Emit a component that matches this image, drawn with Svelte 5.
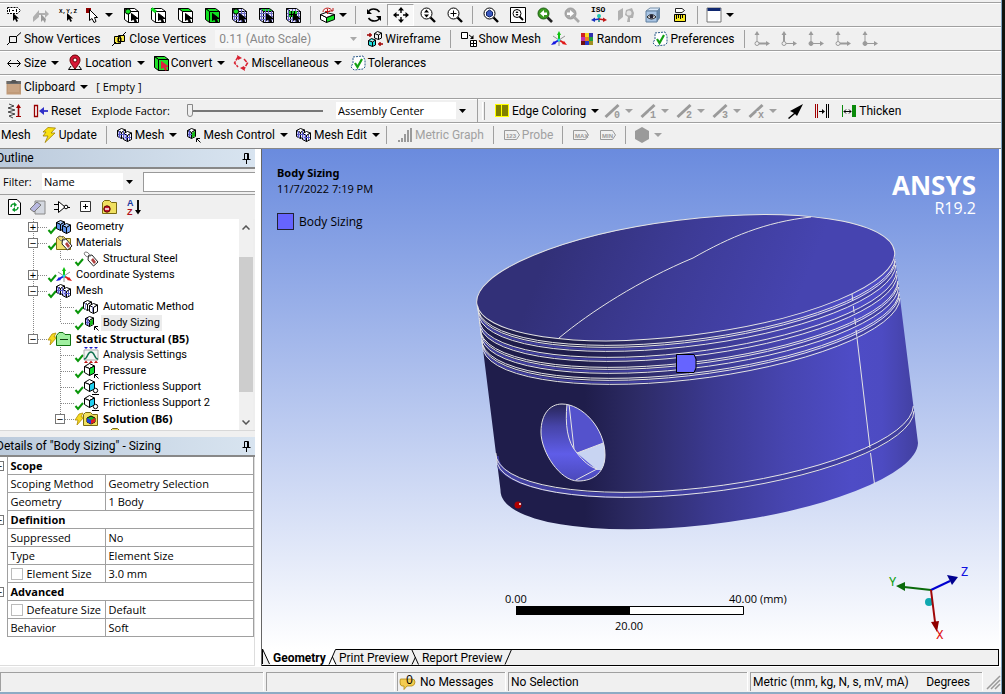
<script>
  const cursor = (x, y, f = '#fff', s = '#000') =>
    `<path transform="translate(${x} ${y})" d="M.5 .5V7.5L2.500 6L4 9H5.500L4.500 5.500H7Z" fill="${f}" stroke="${s}"/>`;
  const cube = (top, side, front, stroke = '#000') =>
    `<path d="M1.500 1.500H11.500L15.500 4.500H5.500Z" fill="${top}" stroke="${stroke}"/><path d="M1.500 1.500L5.500 4.500V15.500L1.500 12.500Z" fill="${side}" stroke="${stroke}"/><path d="M5.500 4.500H15.500V15.500H5.500Z" fill="${front}" stroke="${stroke}"/>`;
  const grid = '<path d="M7.500 2V15M10.500 2V15M13.500 4V15M2 6.500H15M2 9.500H15M2 12.500H15M3.500 2V14" stroke="#6a6ac0" fill="none"/>';
  const hexCube = (x, y, a, b, c) =>
    `<g transform="translate(${x} ${y})" stroke="#000"><path d="M.5 2.500L4.500 .5L8.500 2L4.500 4.500Z" fill="${a}"/><path d="M.5 2.500L4.500 4.500V10.500L.5 8.500Z" fill="${b}"/><path d="M4.500 4.500L8.500 2V8.500L4.500 10.500Z" fill="${c}"/></g>`;
  const twin = (a, b, c) => hexCube(0, 1, a, b, c) + hexCube(6, 4, a, b, c);
  const meshTwin = twin('#fff', '#c4c4f8', '#fff') + '<path d="M2.500 4V11M6.500 4V11M9.500 7V13M12.500 8V13M1 7.500H8M8 10.500H14" stroke="#5a5ac8"/>';
  const meshCube = hexCube(2, 1, '#fff', '#b8b8f4', '#fff') + '<path d="M4.500 3V10M3 7.500H7" stroke="#5a5ac8"/><path d="M7 6L10 4V9L7 11Z" fill="#18b818"/>';
  const tinyArrow = '<path d="M11.500 15V11.500H15M12 12L15.500 15.500" stroke="#000" fill="none"/>';
  const tick = '<path d="M3 2L13 1L15 5L15 12L13 14L4 15L1 12L3 8Z" fill="#fff" stroke="#2a5a8a" stroke-dasharray="2 1"/><path d="M5 8L7.500 12L12 4" stroke="#12a012" stroke-width="2.200" fill="none"/>';
  const lens = (inner) => `<circle cx="6.500" cy="6.500" r="5.500" fill="#fff" stroke="#000"/><path d="M10.500 10.500L15 15" stroke="#000" stroke-width="2.400"/>${inner}`;
  const triad = '<path d="M8 9V3" stroke="#10c010" stroke-width="2"/><path d="M8 0L10 4H6Z" fill="#10c010"/><path d="M8 9L3 12" stroke="#1818e0" stroke-width="2"/><path d="M0 14L3 10L5 13Z" fill="#1818e0"/><path d="M8 9L13 12" stroke="#e01818" stroke-width="2"/><path d="M16 14L11 13L13 10Z" fill="#e01818"/><path d="M2 5L8 9L14 5M8 9V15" stroke="#777" stroke-width=".8" fill="none"/><circle cx="8" cy="9" r="1.500" fill="#20d8d8"/>';
  const coord = (boldX, boldY, solid) =>
    `<g stroke="#9a9a9a" fill="${solid ? '#9a9a9a' : 'none'}"><circle cx="3" cy="12.500" r="2"/><path d="M3 10.500V2" stroke-width="${boldY ? 2 : 1}"/><path d="M5 12.500H13" stroke-width="${boldX ? 2 : 1}"/></g><path d="M3 0L5.500 4H.5ZM16 12.500L12 10V15Z" fill="#9a9a9a"/>`;
  const edge = (n) =>
    `<path d="M.5 14L13.500 2" stroke="#9a9a9a" stroke-width="3"/><text x="9" y="15" font-family="Liberation Mono" font-size="10" font-weight="700" fill="#9a9a9a" stroke="#f0f0f0" stroke-width="2" paint-order="stroke">${n}</text>`;
  const folder = (c) => `<path d="M.5 14.500V3.500L2.500 1.500H7.500L9.500 3.500H14.500V14.500Z" fill="${c}" stroke="#7a6a10"/>`;
  const tag = '<g fill="#fff" stroke="#222"><path d="M5.500 4.500L9 4L15 11L10.500 15L5 9Z"/><path d="M5 6C1 5 0 1 3 1S7 5 7 6" fill="none" stroke="#777"/></g><path d="M8 9L10 7L13 11L11 13Z" fill="#b04040"/>';
  const openCube = (f) => `<g stroke="#000"><path d="M1.500 3.500L6.500 .5L11.500 3L6.500 5.500Z" fill="#fff"/><path d="M1.500 3.500L6.500 5.500V12.500L1.500 9.500Z" fill="#fff"/><path d="M6.500 5.500L11.500 3V10L6.500 12.500Z" fill="${f}"/></g>`;
  const tagBox = (t) => `<path d="M.5 3.500H12.500L15.500 8L12.500 12.500H.5Z" fill="none" stroke="#9a9a9a"/><text x="2" y="10.500" font-family="Liberation Sans" font-size="6" font-weight="700" fill="#9a9a9a">${t}</text>`;

  const icons = {
    label: '<path d="M1.500 .5H11.500L14.500 3.500L11.500 6.500H1.500Z" fill="#fff" stroke="#000" stroke-dasharray="2 1"/><path d="M3.500 2V5M10.500 2V5M6 3.500H8" stroke="#000"/><path d="M7 6V14L9 12L10.500 15L12 14L10.500 11.500H13Z"/>',
    plane: '<path d="M0 10L6 3V10L0 15ZM6 6H12V8H6ZM12 3L16 7L12 11Z" fill="#b0b0b0"/><path d="M8 7V15L10 13L12 16L13 12Z" fill="#999"/>',
    xyz: '<text x="-1" y="5.500" font-family="Liberation Mono" font-size="6" font-weight="700">X,Y,Z</text><path d="M7 6V14L9 12L10.500 15L12 14L10.500 11.500H13Z"/>',
    pick: '<path d="M1 1H6V6H1Z" fill="#900000"/><path d="M4.500 2.500V13.500L7 11.500L9 15.500L11 14.500L9.500 10.500H12.500Z" fill="#fff" stroke="#000"/>',
    vertex: cube('#fff', '#fff', '#fff') + '<circle cx="5" cy="4.500" r="2.600" fill="#10e020" stroke="#000"/>' + cursor(8, 6, '#000'),
    edgeSel: cube('#fff', '#fff', '#fff') + '<path d="M1.500 1.500L6 5" stroke="#10e020" stroke-width="3"/>' + cursor(8, 6, '#000'),
    face: cube('#10e020', '#fff', '#fff') + cursor(8, 6, '#000'),
    body: cube('#10e020', '#10e020', '#10e020') + cursor(8, 6, '#000'),
    node: cube('#e4e4fc', '#e4e4fc', '#e4e4fc') + grid + '<circle cx="5" cy="4.500" r="2.600" fill="#10e020" stroke="#000"/>' + cursor(8, 6, '#000'),
    elemFace: cube('#10e020', '#e4e4fc', '#e4e4fc') + grid + cursor(8, 6, '#000'),
    elem: cube('#e4e4fc', '#e4e4fc', '#e4e4fc') + grid + '<path d="M4 4H12V10H4Z" fill="#10c020"/><path d="M6.500 4V10M9.500 4V10M4 7.500H12" stroke="#000"/>' + cursor(8, 6, '#000'),
    extend: '<path d="M1.500 7.500L7.500 10.500V15.500L1.500 12.500Z" fill="#fff" stroke="#000"/><path d="M7.500 10.500L15.500 7.500V12.500L7.500 15.500Z" fill="#10e020" stroke="#000"/><path d="M1.500 7.500L7 5.500L15.500 7.500L7.500 10.500Z" fill="#fff" stroke="#000"/><path d="M4 5C4 0 12 0 13 4M10 4H14V1M8.500 2V7M6 4.500H11" fill="none" stroke="#c01818"/>',
    rotate: '<path d="M2.500 5C4 1 11 1 13.500 5M13.500 11C12 15 5 15 2.500 11" fill="none" stroke="#000" stroke-width="1.500"/><path d="M1 2V7H6ZM15 14V9H10Z"/>',
    pan: '<path d="M8 0L11 3.500H5ZM8 16L5 12.500H11ZM0 8L3.500 5V11ZM16 8L12.500 11V5Z"/><path d="M8 3V6M8 10V13M3 8H6M10 8H13" stroke="#000" stroke-width="1.400"/>',
    zoom: lens('<path d="M6.500 2.500L9 5.500H4ZM6.500 10.500L4 7.500H9Z"/>'),
    zoomIn: lens('<path d="M6.500 3.500V9.500M3.500 6.500H9.500" stroke="#000"/>'),
    zoomFit: lens('<path d="M3.500 5L6.500 3L9.500 5V8.500L6.500 10L3.500 8.500Z" fill="#3858c0" stroke="#102060"/>'),
    zoomBox: '<path d="M.5 .5H15.500V15.500H.5Z" fill="#fff" stroke="#000"/><circle cx="7" cy="6.500" r="4" fill="none" stroke="#000"/><path d="M9.500 9.500L13 13" stroke="#000" stroke-width="1.800"/><path d="M7 4L8.500 6H5.500ZM7 9L5.500 7H8.500Z"/>',
    prev: '<circle cx="6.500" cy="6.500" r="5.500" fill="#3a9a20" stroke="#1a5a10"/><path d="M10.500 10.500L15 15" stroke="#222" stroke-width="2.600"/><path d="M3 6.500L7 3V5.500H10V8H7V10Z" fill="#fff"/>',
    next: '<circle cx="6.500" cy="6.500" r="5.500" fill="#aaa" stroke="#999"/><path d="M10.500 10.500L15 15" stroke="#aaa" stroke-width="2.600"/><path d="M10 6.500L6 3V5.500H3V8H6V10Z" fill="#fff"/>',
    iso: '<text x="0" y="5" font-family="Liberation Mono" font-size="8" font-weight="700">ISO</text><path d="M8 8V15" stroke="#118080" stroke-width="1.500"/><circle cx="8" cy="9" r="2" fill="#20c8b0"/><path d="M8 12L2 13" stroke="#1830c0" stroke-width="1.500"/><path d="M0 13L4 10.500V15Z" fill="#1830c0"/><path d="M8 12L14 13" stroke="#c01818" stroke-width="1.500"/><path d="M16 13L12 10.500V15Z" fill="#c01818"/>',
    look: '<path d="M0 4L5 1V10L0 14Z" fill="#b0b0b0"/><path d="M8 3L14 1L16 6L15 11L12 11V15H9L10 10L7 8Z" fill="#b0b0b0"/><circle cx="11" cy="6" r="2.500" fill="#e4e4e4"/>',
    view: '<path d="M1 4L5 1H15L12 4Z" fill="#dceafa" stroke="#7890a8"/><path d="M12 4L15 1V11L12 15Z" fill="#6888a8"/><path d="M1 4H12V15H1Z" fill="#a8c4e4" stroke="#6080a0"/><path d="M2 10Q6.500 5 11 10Q6.500 14 2 10Z" fill="#fff" stroke="#222"/><circle cx="6.500" cy="9.500" r="2" fill="#223"/>',
    ruler: '<path d="M3.500 1.500H10L12.500 3.500L10 5.500H3.500Z" fill="#fff" stroke="#222"/><path d="M2.500 7.500H13.500V14.500H2.500Z" fill="#f8e820" stroke="#000"/><path d="M4.500 8V12M6.500 8V11M8.500 8V12M10.500 8V11" stroke="#000"/>',
    window: '<path d="M1 1H15V15H1Z" fill="#fff" stroke="#777"/><path d="M1.500 1H14.500V4H1.500Z" fill="#102870"/>',
    showV: '<path d="M3.500 5.500H10.500V11.500H3.500ZM10.500 5.500L15 1.500M3.500 11.500L1 14" fill="none" stroke="#000"/>',
    closeV: '<path d="M3.500 5.500H9.500V12.500H3.500ZM7.500 4.500H13.500V10.500H7.500Z" fill="#f8e840" stroke="#000"/><path d="M1 15L5 11M11 5L15 1M7 7H10V11H7Z" stroke="#000" fill="none"/>',
    wire: '<g fill="none" stroke="#000"><path d="M7.500 2.500L10.500 .5L14.500 2V7L11.500 8.500L7.500 7ZM7.500 2.500L11.500 4L14.500 2M11.500 4V8.500"/><path d="M1.500 9.500L4.500 7.500L8.500 9V14L5.500 15.500L1.500 14ZM1.500 9.500L5.500 11L8.500 9M5.500 11V15.500" fill="#20e0e0"/></g><path d="M0 4H5M3 2V6M16 13H11M13 11V15" stroke="#a00000" stroke-width="1.400"/>',
    showMesh: '<path d="M.5 1.500H6.500V7.500H.5ZM9.500 9.500H15.500V15.500H9.500ZM12.500 9.500V15.500M9.500 12.500H15.500M8 4L12 7" fill="#fff" stroke="#000"/><path d="M12.500 4V8H9Z"/>',
    triad,
    random: '<path d="M2 2H6V6H2Z" fill="#d02020"/><path d="M6 2H10V6H6Z" fill="#f8d820"/><path d="M10 2H14V6H10Z" fill="#3030b0"/><path d="M2 6H6V10H2Z" fill="#c030b0"/><path d="M6 6H10V10H6Z" fill="#f08020"/><path d="M10 6H14V10H10Z" fill="#20a040"/><path d="M2 10H6V14H2Z" fill="#701010"/><path d="M6 10H10V14H6Z" fill="#2838c8"/><path d="M10 10H14V14H10Z" fill="#a09020"/>',
    tick,
    c1: coord(true, false, false), c2: coord(false, true, false), c3: coord(false, false, true), c4: coord(true, false, false), c5: coord(false, false, true),
    size: '<path d="M2 8.500H14M5 5L1.500 8.500L5 12M11 5L14.500 8.500L11 12" fill="none" stroke="#000"/>',
    pin: '<path d="M4 11L1.500 14.500H14.500L12 11" fill="none" stroke="#000"/><path d="M8 14C4 9 3 7 3 5A5 5 0 0 1 13 5C13 7 12 9 8 14Z" fill="#d81838" stroke="#600"/><circle cx="8" cy="5" r="2" fill="#fff" stroke="#600"/>',
    convert: cube('#20e028', '#20e028', '#20e028') + cursor(8, 6, '#e02040', '#e02040'),
    misc: '<path d="M5 2L1.500 8L5 12M11 4L14.500 8L11 14" fill="none" stroke="#d82030" stroke-width="1.500" stroke-dasharray="4 1"/><path d="M4 0L9 3L5 5ZM12 16L7 13L11 11Z" fill="#d82030"/>',
    clip: '<path d="M.5 2H15V15.500H.5Z" fill="#c09a78"/><path d="M.5 2H15V5H.5Z" fill="#6a6a6a"/><path d="M4 4L6 1H9.500L12 4Z" fill="#555"/><path d="M2 5H13V13H2Z" fill="#c8a484"/>',
    spring: '<path d="M3 1L8 3L2 5L9 7L2 9L9 11L3 13L7 15" fill="none" stroke="#444"/><path d="M12.500 3V13" stroke="#a00000" stroke-width="1.600"/><path d="M12.500 1L15 5H10ZM10 13H15V14H10Z" fill="#a00000"/>',
    reset: '<path d="M1.500 2.500H4.500V13.500H1.500Z" fill="#fff" stroke="#900" stroke-width="1.300"/><path d="M8 8H15" stroke="#3030c8" stroke-width="1.800"/><path d="M6 8L11 4V12Z" fill="#3030c8"/>',
    yellow: '<path d="M1 1H15V14H1Z" fill="#ff0"/><path d="M2 2H7V13H2ZM8 2H14V13H8Z" fill="#808000"/>',
    e0: edge('0'), e1: edge('1'), e2: edge('2'), e3: edge('3'), ex: edge('x'),
    bigArrow: '<path d="M1 15L7 10L3 8L16 1L10 13L8 11L2 16Z"/>',
    gap: '<path d="M1.500 1V15M3.500 1V15" stroke="#a00000"/><path d="M12.500 1V15M14.500 1V15" stroke="#000"/><path d="M5 8.500H10" stroke="#000"/><path d="M8 6L11 8.500L8 11Z"/>',
    thick: '<path d="M1.500 2V14" stroke="#0a8a0a"/><path d="M11 2H15V14H11Z" fill="#0a8a0a"/><path d="M3 8.500H10M5 6.500L3 8.500L5 10.500M8 6.500L10 8.500L8 10.500" fill="none" stroke="#000"/>',
    bolt: '<path d="M7 .5L14.500 1L10 6H14L4 15.500L7 9H2L5 5H2Z" fill="#f8e010" stroke="#a08000" stroke-width=".8"/>',
    mesh: meshTwin,
    meshCtl: meshCube + tinyArrow,
    graph: '<path d="M1 13H3V15H1ZM4 11H6V15H4ZM7 7H9V15H7ZM10 3H12V15H10ZM13 1H15V15H13Z" fill="#9a9a9a"/>',
    probe: tagBox('123'), max: tagBox('MAX'), min: tagBox('MIN'),
    hex: '<path d="M8 0L15 4V12L8 16L1 12V4Z" fill="#9a9a9a"/>',
    refresh: '<path d="M2.500 .5H11L14.500 4V15.500H2.500Z" fill="#fff" stroke="#000"/><path d="M5 8C5 5 8 4 10 6M12 8C12 11 9 12 7 10" fill="none" stroke="#0a9a2a" stroke-width="1.500"/><path d="M8 3V8L11 6ZM9 8V13L6 11Z" fill="#0a9a2a"/>',
    erase: '<path d="M5 2H15V15H5Z" fill="#d4d8e0" stroke="#888"/><path d="M0 10L7 3L11 6L4 13Z" fill="#b8b8e0" stroke="#777"/>',
    gate: '<path d="M4.500 2.500V13.500L11 8Z" fill="#fff" stroke="#000"/><circle cx="12" cy="8" r="1.800" fill="#fff" stroke="#000"/><path d="M0 5.500H4M0 10.500H4M14 8.500H16" stroke="#000"/>',
    plus: '<path d="M2.500 2.500H12.500V12.500H2.500Z" fill="#fff" stroke="#333"/><path d="M5 7.500H10M7.500 5V10" stroke="#000"/>',
    folderRed: folder('#f0e060') + '<circle cx="5" cy="10" r="3.200" fill="#c81830" stroke="#500"/><path d="M3 10H7" stroke="#fff" stroke-width="1.500"/>',
    az: '<text x="1" y="7" font-family="Liberation Sans" font-size="9" font-weight="700" fill="#1838a0">A</text><text x="1" y="16" font-family="Liberation Sans" font-size="9" font-weight="700" fill="#b01020">Z</text><path d="M12 1V12" stroke="#111" stroke-width="2"/><path d="M9 11H15L12 15.500Z"/>',
    geo: twin('#a8ccfc', '#5890e8', '#78a8f4'),
    mat: folder('#f0e070') + '<g transform="translate(1 0)">' + tag + '</g>',
    tag,
    method: twin('#fff', '#fff', '#fff') + '<path d="M2.500 4V11M9.500 7V13" stroke="#88c"/>',
    struct: '<path d="M.5 14.500V4.500L3 1.500H7L9 3.500H14.500V14.500Z" fill="#a0f0a0" stroke="#107010"/><path d="M4 8.500H12" stroke="#104010"/>',
    settings: '<path d="M1 3H15V13H1Z" fill="#f4f4f4" stroke="#aaa"/><path d="M1 12C5 12 4 5 8 5S11 12 15 12" fill="none" stroke="#107050" stroke-width="1.500"/><path d="M1 0H5L3 2ZM6 0H10L8 2ZM11 0H15L13 2Z" fill="#1818c8"/><path d="M1 16L3 13.500L5 16ZM6 16L8 13.500L10 16ZM11 16L13 13.500L15 16Z" fill="#c01818"/>',
    pressure: openCube('#10e030') + tinyArrow,
    support: openCube('#20d0f0') + '<circle cx="12.500" cy="11.500" r="2.200" fill="#fff" stroke="#000"/><path d="M9 15.500H16" stroke="#000"/>',
    solution: folder('#f0e060') + '<path d="M4 7L8 5L12 7V11L8 13L4 11Z" fill="#18b828" stroke="#000"/><path d="M8 9L12 7V11L8 13Z" fill="#e02020"/><path d="M4 7L8 9V13L4 11Z" fill="#2040e0"/>',
    folder: folder('#f0e060'),
    msg: '<path d="M1 5H12Q15 5 15 8T12 12H7L4 15.500L4 12H2Q0 12 0 8T1 5Z" fill="#f4cc50" stroke="#b08810" stroke-width=".8"/><text x="6" y="10" font-family="Open Sans" font-size="12">0</text>'
  };

  const sep = { sep: true };
  const ic = (i, name, o = {}) => ({ i, name, ...o });
  const row1 = [ic('label', 'Label'), ic('plane', 'Direction'), ic('xyz', 'Coordinates'), ic('pick', 'Select Type', { d: 1 }), ic('vertex', 'Vertex'), ic('edgeSel', 'Edge'), ic('face', 'Face'), ic('body', 'Body'), ic('node', 'Node'), ic('elemFace', 'Element Face'), ic('elem', 'Element'), sep, ic('extend', 'Extend', { d: 1 }), sep, ic('rotate', 'Rotate'), ic('pan', 'Pan', { on: 1 }), ic('zoom', 'Zoom'), ic('zoomIn', 'Box Zoom'), sep, ic('zoomFit', 'Zoom to Fit'), ic('zoomBox', 'Magnifier'), ic('prev', 'Previous View'), ic('next', 'Next View'), ic('iso', 'ISO'), ic('look', 'Look At'), ic('view', 'Manage Views'), ic('ruler', 'Rescale'), sep, ic('window', 'Viewports', { d: 1 })];
  const row2a = [ic('showV', '', { t: 'Show Vertices' }), ic('closeV', '', { t: 'Close Vertices' })];
  const row2b = [ic('wire', '', { t: 'Wireframe' }), sep, ic('showMesh', '', { t: 'Show Mesh' }), ic('triad', 'Show Coordinates'), ic('random', '', { t: 'Random' }), ic('tick', '', { t: 'Preferences' }), sep, ic('c1', 'Axis 1'), ic('c2', 'Axis 2'), ic('c3', 'Axis 3'), ic('c4', 'Axis 4'), ic('c5', 'Axis 5')];
  const row3 = [ic('size', '', { t: 'Size', d: 1 }), ic('pin', '', { t: 'Location', d: 1 }), ic('convert', '', { t: 'Convert', d: 1 }), ic('misc', '', { t: 'Miscellaneous', d: 1 }), ic('tick', '', { t: 'Tolerances' })];
  const row5a = [ic('spring', 'Explode'), ic('reset', '', { t: 'Reset' })];
  const row5b = [ic('yellow', '', { t: 'Edge Coloring', d: 1 }), ...['0', '1', '2', '3', 'x'].map((n) => ic('e' + n, 'Edges ' + n, { d: 1, off: 1 })), ic('bigArrow', 'Edge Direction'), ic('gap', 'Edge Gap'), ic('thick', '', { t: 'Thicken' })];
  const row6 = [ic('bolt', '', { t: 'Update' }), sep, ic('mesh', '', { t: 'Mesh', d: 1 }), ic('meshCtl', '', { t: 'Mesh Control', d: 1 }), ic('mesh', '', { t: 'Mesh Edit', d: 1 }), sep, ic('graph', '', { t: 'Metric Graph', off: 1 }), sep, ic('probe', '', { t: 'Probe', off: 1 }), sep, ic('max', 'Maximum', { off: 1 }), ic('min', 'Minimum', { off: 1 }), sep, ic('hex', 'Solid', { d: 1, off: 1 })];
  const paneTools = [ic('refresh', 'Refresh'), ic('erase', 'Clear'), ic('gate', 'Negate'), ic('plus', 'Expand All'), ic('folderRed', 'Hide Folders'), ic('az', 'Sort')];

  const tree = [
    { l: 1, x: '+', i: 'geo', t: 'Geometry' },
    { l: 1, x: '-', i: 'mat', t: 'Materials' },
    { l: 2, up: 1, last: 1, i: 'tag', t: 'Structural Steel' },
    { l: 1, x: '+', i: 'triad', t: 'Coordinate Systems' },
    { l: 1, x: '-', i: 'mesh', t: 'Mesh' },
    { l: 2, up: 1, i: 'method', t: 'Automatic Method' },
    { l: 2, up: 1, last: 1, i: 'meshCtl', t: 'Body Sizing', sel: 1 },
    { l: 1, x: '-', last: 1, i: 'struct', t: 'Static Structural (B5)', b: 1, bolt: 1 },
    { l: 2, i: 'settings', t: 'Analysis Settings' },
    { l: 2, i: 'pressure', t: 'Pressure' },
    { l: 2, i: 'support', t: 'Frictionless Support' },
    { l: 2, i: 'support', t: 'Frictionless Support 2' },
    { l: 2, x: '-', last: 1, i: 'solution', t: 'Solution (B6)', b: 1, bolt: 1 }
  ];

  const details = [
    { h: 'Scope' }, { k: 'Scoping Method', v: 'Geometry Selection' }, { k: 'Geometry', v: '1 Body' },
    { h: 'Definition' }, { k: 'Suppressed', v: 'No' }, { k: 'Type', v: 'Element Size' }, { k: 'Element Size', v: '3.0 mm', c: 1 },
    { h: 'Advanced' }, { k: 'Defeature Size', v: 'Default', c: 1 }, { k: 'Behavior', v: 'Soft' }
  ];

  const rings = [5, 7, 11, 17, 21, 27, 29, 33, 38, 40, 44];
  const bands = [9, 19, 31, 42];
  const arc = (dy) => `M${477 + dy * 0.124} ${301 + dy}A200 54.900 -7.100 0 0 ${894.500 + dy * 0.124} ${254 + dy}`;
</script>

{#snippet glyph(name)}
  <svg class="glyph" width="16" height="16" viewBox="0 0 16 16" aria-hidden="true">{@html icons[name]}</svg>
{/snippet}

{#snippet bar(items)}
  {#each items as it}
    {#if it.sep}
      <span class="sep"></span>
    {:else}
      <button class="tool" class:solo={!it.t} class:drop={it.d} class:on={it.on} class:off={it.off} aria-label={it.t ?? it.name}>
        {@render glyph(it.i)}
        {#if it.t}<span>{it.t}</span>{/if}
        {#if it.d}<i class="tri"></i>{/if}
      </button>
    {/if}
  {/each}
{/snippet}

{#snippet pushpin()}
  <svg width="9" height="11" viewBox="0 0 9 11" aria-hidden="true"><path d="M2.500 6V.5H6.500V6M.5 6.500H8.500M4.500 7V11" fill="none" stroke="#000" /><path d="M5.500 1V6" stroke="#000" /></svg>
{/snippet}

<div class="desk">
  <div class="app">
    <header>
      <div class="strip"></div>
      <div class="row">{@render bar(row1)}</div>
      <div class="row">
        {@render bar(row2a)}
        <select class="scale" disabled aria-label="Vertex scale"><option>0.11 (Auto Scale)</option></select>
        {@render bar(row2b)}
      </div>
      <div class="row">{@render bar(row3)}</div>
      <div class="row">
        {@render bar([ic('clip', '', { t: 'Clipboard', d: 1 })])}
        <span class="empty">[ Empty ]</span>
      </div>
      <div class="row">
        {@render bar(row5a)}
        <label class="explode">Explode Factor: <input type="range" min="0" max="100" value="0" /></label>
        <select class="assembly" aria-label="Explode origin"><option>Assembly Center</option></select>
        <span class="divider"></span>
        <span class="grip"></span>
        {@render bar(row5b)}
      </div>
      <div class="row">
        <span class="context">Mesh</span>
        {@render bar(row6)}
      </div>
    </header>

    <main>
      <aside>
        <section class="outline">
          <h2><span>Outline</span>{@render pushpin()}</h2>
          <div class="filter">
            <label for="filter">Filter:</label>
            <select id="filter"><option>Name</option></select>
            <input type="text" aria-label="Filter text" />
          </div>
          <div class="panetools">
            {#each paneTools as p}<button aria-label={p.name}>{@render glyph(p.i)}</button>{/each}
          </div>
          <div class="treebox">
            <ul class="tree">
              {#each tree as n}
                <li>
                  {#if n.l === 2}<span class="cell" class:stem={n.up}></span>{/if}
                  <span class="cell line" class:last={n.last}>
                    {#if n.x}<button class="box" aria-label="Toggle {n.t}">{n.x === '+' ? '+' : '−'}</button>{/if}
                  </span>
                  <svg class="state" width="10" height="16" viewBox="0 0 10 16" aria-hidden="true">
                    {#if n.bolt}
                      <path d="M5 3L9 2L7 6H10L3 14L4 9H1Z" fill="#f4d820" stroke="#b08c00" stroke-width=".8" />
                    {:else}
                      <path d="M1.500 11L4 14L9 8" fill="none" stroke="#0a960a" stroke-width="2" />
                    {/if}
                  </svg>
                  {@render glyph(n.i)}
                  <span class="name" class:bold={n.b} class:sel={n.sel}>{n.t}</span>
                </li>
              {/each}
              <li class="more"><span class="cell"></span><span class="cell"></span>{@render glyph('folder')}</li>
            </ul>
            <div class="scroll">
              <svg width="8" height="5" viewBox="0 0 8 5" aria-hidden="true"><path d="M.5 4.500L4 1L7.500 4.500" fill="none" stroke="#555" stroke-width="1.500" /></svg>
              <div class="thumb"></div>
              <svg width="8" height="5" viewBox="0 0 8 5" aria-hidden="true"><path d="M.5 .5L4 4L7.500 .5" fill="none" stroke="#555" stroke-width="1.500" /></svg>
            </div>
          </div>
        </section>

        <section class="details">
          <h2><span>Details of "Body Sizing" - Sizing</span>{@render pushpin()}</h2>
          <div class="sheet">
            <table>
              <colgroup><col class="c-gut" /><col class="c-key" /><col /></colgroup>
              <tbody>
                {#each details as d}
                  <tr>
                    <td class="gut">{#if d.h}<button class="box" aria-label="Collapse {d.h}">−</button>{/if}</td>
                    {#if d.h}
                      <th colspan="2">{d.h}</th>
                    {:else}
                      <td>{#if d.c}<label><input type="checkbox" />{d.k}</label>{:else}{d.k}{/if}</td>
                      <td>{d.v}</td>
                    {/if}
                  </tr>
                {/each}
              </tbody>
            </table>
          </div>
        </section>
      </aside>

      <section class="stage">
        <div class="view">
          <svg class="scene" viewBox="262 149 737 500" preserveAspectRatio="xMidYMid meet" aria-label="Piston model">
            <defs>
              <linearGradient id="side" gradientUnits="userSpaceOnUse" x1="480" y1="0" x2="917" y2="0">
                <stop offset="0" stop-color="#1f1d4b" /><stop offset=".24" stop-color="#1f1d4b" /><stop offset=".36" stop-color="#2d2b66" />
                <stop offset=".53" stop-color="#3b3990" /><stop offset=".7" stop-color="#4745b0" /><stop offset=".85" stop-color="#4e4cc6" />
                <stop offset=".92" stop-color="#4d4bc2" /><stop offset="1" stop-color="#4240a0" />
              </linearGradient>
              <linearGradient id="lid" gradientUnits="userSpaceOnUse" x1="560" y1="220" x2="780" y2="340">
                <stop offset="0" stop-color="#323078" /><stop offset=".5" stop-color="#3d3b96" /><stop offset="1" stop-color="#4644b0" />
              </linearGradient>
              <linearGradient id="bore" x1="0" y1="0" x2="0" y2="1">
                <stop offset="0" stop-color="#24224f" /><stop offset=".3" stop-color="#4644a8" /><stop offset=".65" stop-color="#5f5de8" /><stop offset="1" stop-color="#4a48b8" />
              </linearGradient>
              <clipPath id="hole"><path d="M541 432C541 414 550 404 562 404C582 404 605 428 605 455C605 472 594 481 578 481C560 481 541 452 541 432Z" /></clipPath>
              <clipPath id="shell"><path d="M477 301L500.500 490A200 54.900 -7.100 0 0 918 443L894.500 254V200H477Z" /></clipPath>
            </defs>
            <path d="M477 301L500.500 490A200 54.900 -7.100 0 0 918 443L894.500 254Z" fill="url(#side)" />
            <g fill="none" stroke="#413fa0" clip-path="url(#shell)">
              <g stroke-width="2">{#each bands as b}<path d={arc(b)} />{/each}</g>
              <path d={arc(155)} stroke-width="5" />
            </g>
            <ellipse cx="685.700" cy="277.700" rx="210.500" ry="57.800" transform="rotate(-7.100 685.700 277.700)" fill="url(#lid)" stroke="#e4e4e4" />
            <g fill="none" stroke="#e4e4e4">
              {#each rings as r}<path d={arc(r)} />{/each}
              <path d={arc(152)} /><path d={arc(157)} />
              <path d="M559 338C590 312 640 280 693 258C730 237 765 222 811 217" />
              <path d="M852 294L857 338" stroke-dasharray="7 5" /><path d="M857 338L870 448M870.500 453L874.500 484" />
            </g>
            <g clip-path="url(#hole)">
              <path d="M540 402H606V482H540Z" fill="url(#bore)" />
              <path d="M567 404C565 424 567 442 577 453L606 443V402Z" fill="#5452cc" />
              <path d="M577 453L606 442V470H597Z" fill="#c8d4f2" />
              <path d="M567 404C565 424 567 442 577 453C583 461 590 467 597 469M569 404L574 449M577 453L606 442M576 480L597 469" fill="none" stroke="#e4e4e4" />
            </g>
            <path d="M541 432C541 414 550 404 562 404C582 404 605 428 605 455C605 472 594 481 578 481C560 481 541 452 541 432Z" fill="none" stroke="#e4e4e4" />
            <path d="M676.500 354.500H694L696 359V368L694 372.500H676.500Z" fill="#6664ff" stroke="#000" />
            <circle cx="518" cy="505" r="3.500" fill="#b00000" /><circle cx="520" cy="504" r="1" fill="#fff" />

            <g stroke-width="2">
              <circle cx="929" cy="602" r="4" fill="#10a8b0" />
              <path d="M931 590L904 587" stroke="#0a6a0a" /><path d="M896 586L905 582V591Z" fill="#0a6a0a" />
              <path d="M931 590L950 581" stroke="#0000d0" /><path d="M958 577L947 575L952 585Z" fill="#000090" />
              <path d="M931 590L935 622" stroke="#a00808" /><path d="M937 632L931 622L939 621Z" fill="#900000" />
            </g>
            <g font-family="Roboto" font-size="12"><text x="889" y="586" fill="#10a010">Y</text><text x="961" y="576" fill="#1010e0">Z</text><text x="936" y="639" fill="#e01010">X</text></g>
            <path d="M516.500 606.500H743.500V614.500H516.500Z" fill="#fff" stroke="#000" /><path d="M516 606H630V615H516Z" />
            <g font-family="Open Sans" font-size="11"><text x="505" y="603">0.00</text><text x="729" y="603">40.00 (mm)</text><text x="615" y="630">20.00</text></g>
          </svg>
          <div class="caption">
            <strong>Body Sizing</strong>
            <span>11/7/2022 7:19 PM</span>
            <div class="key-row"><i></i>Body Sizing</div>
          </div>
          <div class="brand"><b>ANSYS</b><span>R19.2</span></div>
        </div>
        <nav>
          <svg width="9" height="15" viewBox="0 0 9 15" aria-hidden="true"><path d="M0 0V15H7.500Z" fill="#f0f0f0" /><path d="M.5 0V15M.5 0L7.500 15" fill="none" stroke="#000" /></svg>
          <button class="active">Geometry</button>
          <svg width="9" height="16" viewBox="0 0 9 16" aria-hidden="true"><path d="M0 0H9V16H0Z" fill="#fff" /><path d="M4.500 8L7.500 .5H9V16H8Z" fill="#f0f0f0" /><path d="M1 15.500L7.500 .5H9M4.500 8L8 15.500" fill="none" stroke="#000" /></svg>
          <button>Print Preview</button>
          <svg width="9" height="16" viewBox="0 0 9 16" aria-hidden="true"><path d="M0 .5H9M.5 0L7.500 15.500M1 15.500L4.500 8" fill="none" stroke="#000" /></svg>
          <button>Report Preview</button>
          <svg width="9" height="16" viewBox="0 0 9 16" aria-hidden="true"><path d="M0 .5H9M1 15.500L7.500 .5" fill="none" stroke="#000" /></svg>
          <span class="rest"></span>
        </nav>
      </section>
    </main>

    <footer>
      <span class="s1"></span>
      <span class="s2"></span>
      <span class="s3">{@render glyph('msg')}No Messages</span>
      <span class="s4">No Selection</span>
      <span class="s5"><span>Metric (mm, kg, N, s, mV, mA)</span><span>Degrees</span></span>
      <svg width="16" height="18" viewBox="0 0 16 18" aria-hidden="true"><path d="M2 17L15 4M6 17L15 8M10 17L15 12" stroke="#999" stroke-width="1.500" /></svg>
    </footer>
  </div>
</div>

<style>
  :global(body) { margin: 0; background: #10140f; }
  .desk { height: 100vh; padding-right: 3px; box-sizing: border-box; background: #10140f; }
  .app { height: 100%; box-sizing: border-box; display: flex; flex-direction: column; background: #f0f0f0; border-right: 1px solid #7fa4c4; border-bottom: 2px solid #8cabc4; font: 12px/16px Roboto, "Open Sans", sans-serif; color: #000; overflow: hidden; }
  button, select, input { font: inherit; color: inherit; }
  button { background: none; border: 0; padding: 0; }
  .glyph { flex: none; display: block; overflow: visible; }

  header { padding-bottom: 2px; }
  .strip { height: 2px; }
  .row { height: 24px; box-sizing: border-box; display: flex; align-items: center; border-top: 1px solid #a0a0a0; box-shadow: inset 0 1px #fff; white-space: nowrap; overflow: hidden; }
  .tool { display: flex; align-items: center; gap: 2px; height: 22px; padding: 0 5px 0 6px; flex: none; box-sizing: border-box; }
  .tool.drop { padding-right: 2px; }
  .tool.solo { width: 27px; padding: 0; justify-content: center; }
  .tool.solo.drop { width: 36px; justify-content: flex-start; padding-left: 4px; }
  .tool.on { background: #f8f8f8; border: 1px solid #a0a0a0; border-right-color: #fff; border-bottom-color: #fff; }
  .tool.off { color: #a0a0a0; }
  .tri { width: 0; height: 0; border: 4px solid transparent; border-bottom: 0; border-top-color: #000; margin-left: 3px; }
  .off .tri { border-top-color: #a0a0a0; }
  .solo .tri { margin-left: 2px; }
  .sep { flex: none; width: 1px; height: 18px; margin: 0 4px; background: #a0a0a0; }
  select { appearance: none; border: 0; border-radius: 0; box-sizing: border-box; background: url("data:image/svg+xml,%3Csvg xmlns='http://www.w3.org/2000/svg' width='7' height='4'%3E%3Cpath d='M0 0h7L3.500 4z'/%3E%3C/svg%3E") no-repeat right 4px center, linear-gradient(#f0f0f0, #f0f0f0) no-repeat right / 14px 100%, #fff; }
  .scale { width: 146px; height: 18px; margin: 0 0 0 4px; padding: 0 4px; color: #888; opacity: 1; background: url("data:image/svg+xml,%3Csvg xmlns='http://www.w3.org/2000/svg' width='7' height='4'%3E%3Cpath fill='%23aaa' d='M0 0h7L3.500 4z'/%3E%3C/svg%3E") no-repeat right 4px center, #f7f7f7; }
  .empty, .explode { font: 11px/16px "Open Sans", sans-serif; }
  .empty { margin-left: 6px; }
  .explode { display: flex; align-items: center; gap: 17px; margin-left: 5px; }
  .explode input { appearance: none; width: 136px; height: 14px; margin: 0; background: linear-gradient(#777, #777) center / 100% 2px no-repeat; }
  .explode input::-webkit-slider-thumb { appearance: none; width: 6px; height: 13px; background: #f0f0f0; border: 1px solid #888; border-radius: 0 0 3px 3px; }
  .assembly { width: 134px; height: 17px; margin-left: 13px; padding: 0 2px; font: 11px/16px "Open Sans", sans-serif; }
  .divider { flex: none; width: 1px; height: 24px; margin-left: 7px; background: #a0a0a0; }
  .grip { flex: none; width: 3px; height: 18px; margin: 0 3px 0 4px; box-sizing: border-box; border-right: 1px solid #a0a0a0; border-left: 1px solid #fff; }
  .context { padding: 0 4px 0 1px; }

  main { flex: 1; min-height: 0; display: flex; background: #fff; border-top: 1px solid #888; }
  aside { flex: none; width: 255px; display: flex; flex-direction: column; gap: 6px; margin-right: 6px; background: #f0f0f0; }
  section { min-width: 0; }
  h2 { margin: 0; height: 20px; padding: 0 4px 0 0; display: flex; align-items: center; justify-content: space-between; font: 12px/18px Roboto, sans-serif; background: linear-gradient(90deg, #bccbdc, #d8e4f0); border-bottom: 2px solid #888; box-sizing: border-box; white-space: nowrap; }
  h2 span { margin-left: -4px; }
  .outline { height: 282px; display: flex; flex-direction: column; border-bottom: 1px solid #d8d8d8; box-sizing: border-box; background: #fff; }
  .filter { display: flex; align-items: center; height: 26px; background: #f0f0f0; font: 11px/16px "Open Sans", sans-serif; border-bottom: 1px solid #a0a0a0; box-sizing: border-box; }
  .filter label { width: 39px; padding-left: 3px; box-sizing: border-box; }
  .filter select { width: 95px; height: 17px; margin: 0 6px 0 3px; padding: 0 2px; }
  .filter input { flex: 1; min-width: 0; height: 20px; box-sizing: border-box; border: 1px solid #999; border-right: 0; background: #fff; }
  .panetools { display: flex; gap: 8px; padding: 4px 6px; height: 24px; box-sizing: border-box; background: #f0f0f0; }
  .treebox { flex: 1; min-height: 0; display: flex; background: #fff; border-right: 2px solid #eee; }
  .tree { flex: 1; min-width: 0; margin: 0; padding: 0; list-style: none; overflow: hidden; font: 11px/16px Roboto, sans-serif; }
  .tree li { display: flex; align-items: center; height: 16px; padding-left: 24px; white-space: nowrap; }
  .cell { flex: none; width: 27px; height: 16px; display: flex; align-items: center; padding-left: 4px; box-sizing: border-box; }
  .line { background: repeating-linear-gradient(#888 0 1px, transparent 1px 2px) 9px 0 / 1px 100% no-repeat, repeating-linear-gradient(90deg, #888 0 1px, transparent 1px 2px) 10px 8px / 14px 1px no-repeat; }
  .line.last { background-size: 1px 50%, 14px 1px; }
  .stem { background: repeating-linear-gradient(#888 0 1px, transparent 1px 2px) 9px 0 / 1px 100% no-repeat; }
  .box { width: 10px; height: 10px; box-sizing: border-box; border: 1px solid #777; background: #fff; font: 11px/8px "Liberation Sans", sans-serif; color: #000; text-align: center; }
  .state { flex: none; margin-left: -4px; }
  .tree .glyph { margin-left: -1px; }
  .name { margin-left: 2px; padding: 0 2px; }
  .bold { font: bold 11px/16px "Noto Sans", sans-serif; }
  .sel { background: #ececec; }
  .more .glyph { margin-left: 32px; }
  .scroll { width: 14px; display: flex; flex-direction: column; align-items: center; padding: 6px 0 5px; background: #f0f0f0; box-sizing: border-box; }
  .thumb { width: 14px; height: 135px; margin: 27px 0 auto; background: #cdcdcd; }

  .details { flex: 1; min-height: 0; display: flex; flex-direction: column; background: #fff; }
  .sheet { flex: 1; min-height: 0; overflow: hidden; border-bottom: 1px solid #ddd; border-right: 1px solid #ddd; }
  table { width: 100%; border-collapse: collapse; table-layout: fixed; font: 11px/16px "Open Sans", sans-serif; }
  .c-gut { width: 7px; }
  .c-key { width: 98px; }
  td, th { height: 17px; padding: 0 0 0 3px; border: 1px solid #a0a0a0; text-align: left; white-space: nowrap; line-height: 16px; }
  .gut { padding: 0; border-width: 0 1px 0 0; overflow: hidden; }
  tr:first-child > * { border-top: 0; }
  .gut .box { display: block; margin-left: -6px; }
  td label { display: flex; align-items: center; gap: 4px; }
  td input { appearance: none; width: 12px; height: 12px; margin: 0; border: 1px solid #bbb; background: #fff; }

  .stage { flex: 1; display: flex; flex-direction: column; border-left: 1px solid #666; margin-right: 2px; }
  .view { flex: 1; min-height: 0; position: relative; overflow: hidden; background: linear-gradient(#6a8bde, #fff); }
  .scene { position: absolute; inset: 0; width: 100%; height: 100%; }
  .caption { position: absolute; left: 15px; top: 16px; display: flex; flex-direction: column; font: 12px/16px "Open Sans", sans-serif; color: #000; }
  .caption strong { font: bold 11px/16px "Noto Sans", sans-serif; }
  .caption span { font-size: 11px; }
  .key-row { display: flex; align-items: center; gap: 5px; margin-top: 16px; }
  .key-row i { width: 15px; height: 15px; border: 1px solid #223; background: #6664ff; }
  .brand { position: absolute; right: 23px; top: 23px; text-align: right; color: #fff; font-family: "Open Sans", sans-serif; }
  .brand b { display: block; font-size: 26px; line-height: 26px; font-weight: 700; }
  .brand span { display: block; font-size: 16px; line-height: 20px; }
  nav { display: flex; height: 16px; border-bottom: 1px solid #000; background: #f0f0f0; border-right: 1px solid #000; }
  nav svg { flex: none; }
  nav svg:first-child { background: #fff; }
  nav button { height: 16px; line-height: 16px; border-top: 1px solid #000; padding: 0 2px; white-space: nowrap; }
  nav .active { font-weight: 700; background: #fff; border-top-color: #fff; }
  .rest { flex: 1; border-top: 1px solid #000; }

  footer { display: flex; gap: 3px; height: 26px; padding: 5px 0 1px; box-sizing: border-box; border-top: 1px solid #fff; white-space: nowrap; }
  footer > span { display: flex; align-items: center; gap: 4px; box-sizing: border-box; border: solid #a0a0a0; border-width: 1px 0 0 1px; box-shadow: 1px 0 #fff; padding-left: 2px; }
  .s1 { width: 263px; }
  .s2 { width: 128px; }
  .s3 { width: 108px; }
  .s4 { flex: 1; }
  .s5 { width: 232px; justify-content: space-between; padding-right: 12px; }
</style>
